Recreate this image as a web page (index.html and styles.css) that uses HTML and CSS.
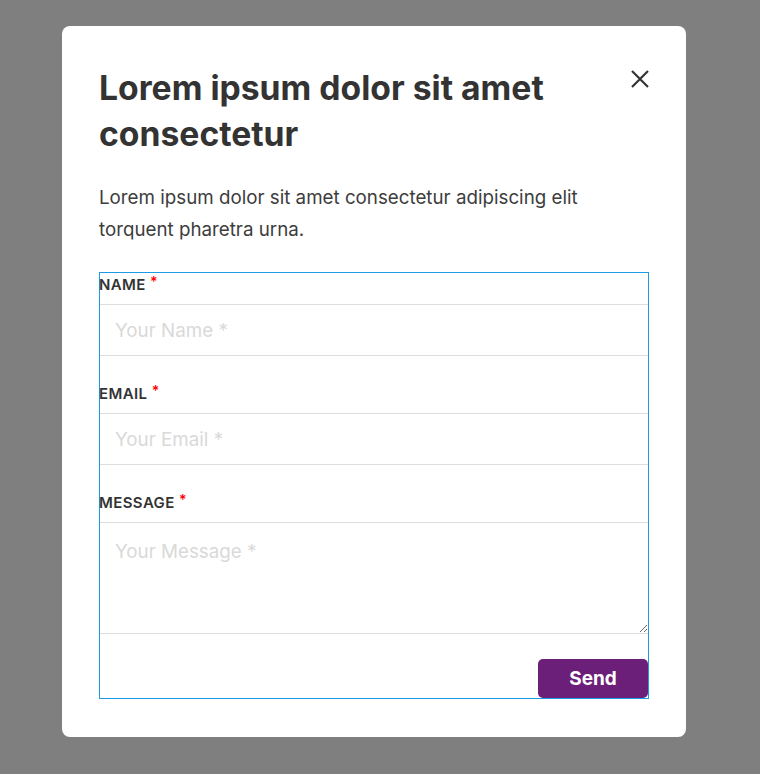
FILE: index.html
```html
<!DOCTYPE html>
<html lang="en">
<head>
  <meta charset="UTF-8">
  <meta name="viewport" content="width=device-width, initial-scale=1.0">
  <title>Contact</title>
  <link rel="stylesheet" href="styles.css">
</head>
<body>
  <!-- Barra superior de la página -->
  <header class="top-bar"></header>

  <!-- Fondo oscuro del modal -->
  <div class="overlay">
    <div class="modal">
      <button class="close-btn" aria-label="Close">
        <svg width="20" height="20" viewBox="0 0 20 20">
          <path d="M2 2 L18 18 M18 2 L2 18" stroke="#333" stroke-width="2.2" fill="none"/>
        </svg>
      </button>

      <h1 class="modal-title">Lorem ipsum dolor sit amet consectetur</h1>
      <p class="modal-text">Lorem ipsum dolor sit amet consectetur adipiscing elit torquent pharetra urna.</p>

      <form class="contact-form">
        <div class="field">
          <label for="name">Name <span class="req">*</span></label>
          <input type="text" id="name" placeholder="Your Name *">
        </div>
        <div class="field">
          <label for="email">Email <span class="req">*</span></label>
          <input type="email" id="email" placeholder="Your Email *">
        </div>
        <div class="field field-last">
          <label for="message">Message <span class="req">*</span></label>
          <textarea id="message" placeholder="Your Message *"></textarea>
        </div>
        <div class="actions">
          <button type="submit" class="send-btn">Send</button>
        </div>
      </form>
    </div>
  </div>
</body>
</html>
```

FILE: styles.css
```css
body {
  margin: 0;
  padding: 0;
  background: #fff;
  font-family: 'Inter', 'Noto Sans', sans-serif;
  overflow: hidden;
}

.top-bar {
  height: 12px;
  background: #fff;
  box-shadow: 0 2px 16px rgba(0, 0, 0, 0.1);
}

/* Fondo oscuro */
.overlay {
  position: fixed;
  top: 0;
  left: 0;
  width: 100%;
  height: 100%;
  background: rgba(0, 0, 0, 0.5);
  padding: 26px 0 0 62px;
  box-sizing: border-box;
}

.modal {
  position: relative;
  width: 624px;
  box-sizing: border-box;
  background: #fff;
  border-radius: 8px;
  padding: 39px 37px 38px;
}

.close-btn {
  position: absolute;
  top: 43px;
  right: 36px;
  padding: 0;
  border: none;
  background: none;
  cursor: pointer;
  line-height: 0;
}

.modal-title {
  margin: 0 40px 0 0;
  font-size: 33.7px;
  line-height: 46px;
  font-weight: 700;
  color: #333;
}

.modal-text {
  margin: 25px 0 26px;
  font-size: 18.75px;
  line-height: 32px;
  color: #3d3d3d;
}

/* Formulario */
.contact-form {
  border: 1px solid #1a9be6;
}

.field {
  margin-bottom: 26px;
}

.field-last {
  margin-bottom: 25px;
}

.field label {
  display: block;
  margin: 0 0 7px -1px;
  font-size: 15px;
  line-height: 24px;
  font-weight: 600;
  letter-spacing: 0.4px;
  text-transform: uppercase;
  color: #333;
}

.req {
  color: #f00;
  font-size: 14px;
  vertical-align: top;
  position: relative;
  top: -3px;
}

.field input,
.field textarea {
  display: block;
  width: 100%;
  box-sizing: border-box;
  margin: 0;
  border: none;
  border-top: 1px solid #ddd;
  border-bottom: 1px solid #ddd;
  padding: 0 15px;
  font-family: inherit;
  font-size: 18.8px;
  color: #333;
  background: #fff;
}

.field input {
  height: 52px;
}

.field textarea {
  height: 112px;
  padding-top: 17px;
  resize: vertical;
}

.field input::placeholder,
.field textarea::placeholder {
  color: #d9d9d9;
}

.actions {
  display: flex;
  justify-content: flex-end;
}

.send-btn {
  width: 110px;
  height: 39px;
  border: none;
  border-radius: 5px;
  background: #6c1f78;
  color: #fff;
  font-family: inherit;
  font-size: 19px;
  font-weight: 700;
  cursor: pointer;
}
```
